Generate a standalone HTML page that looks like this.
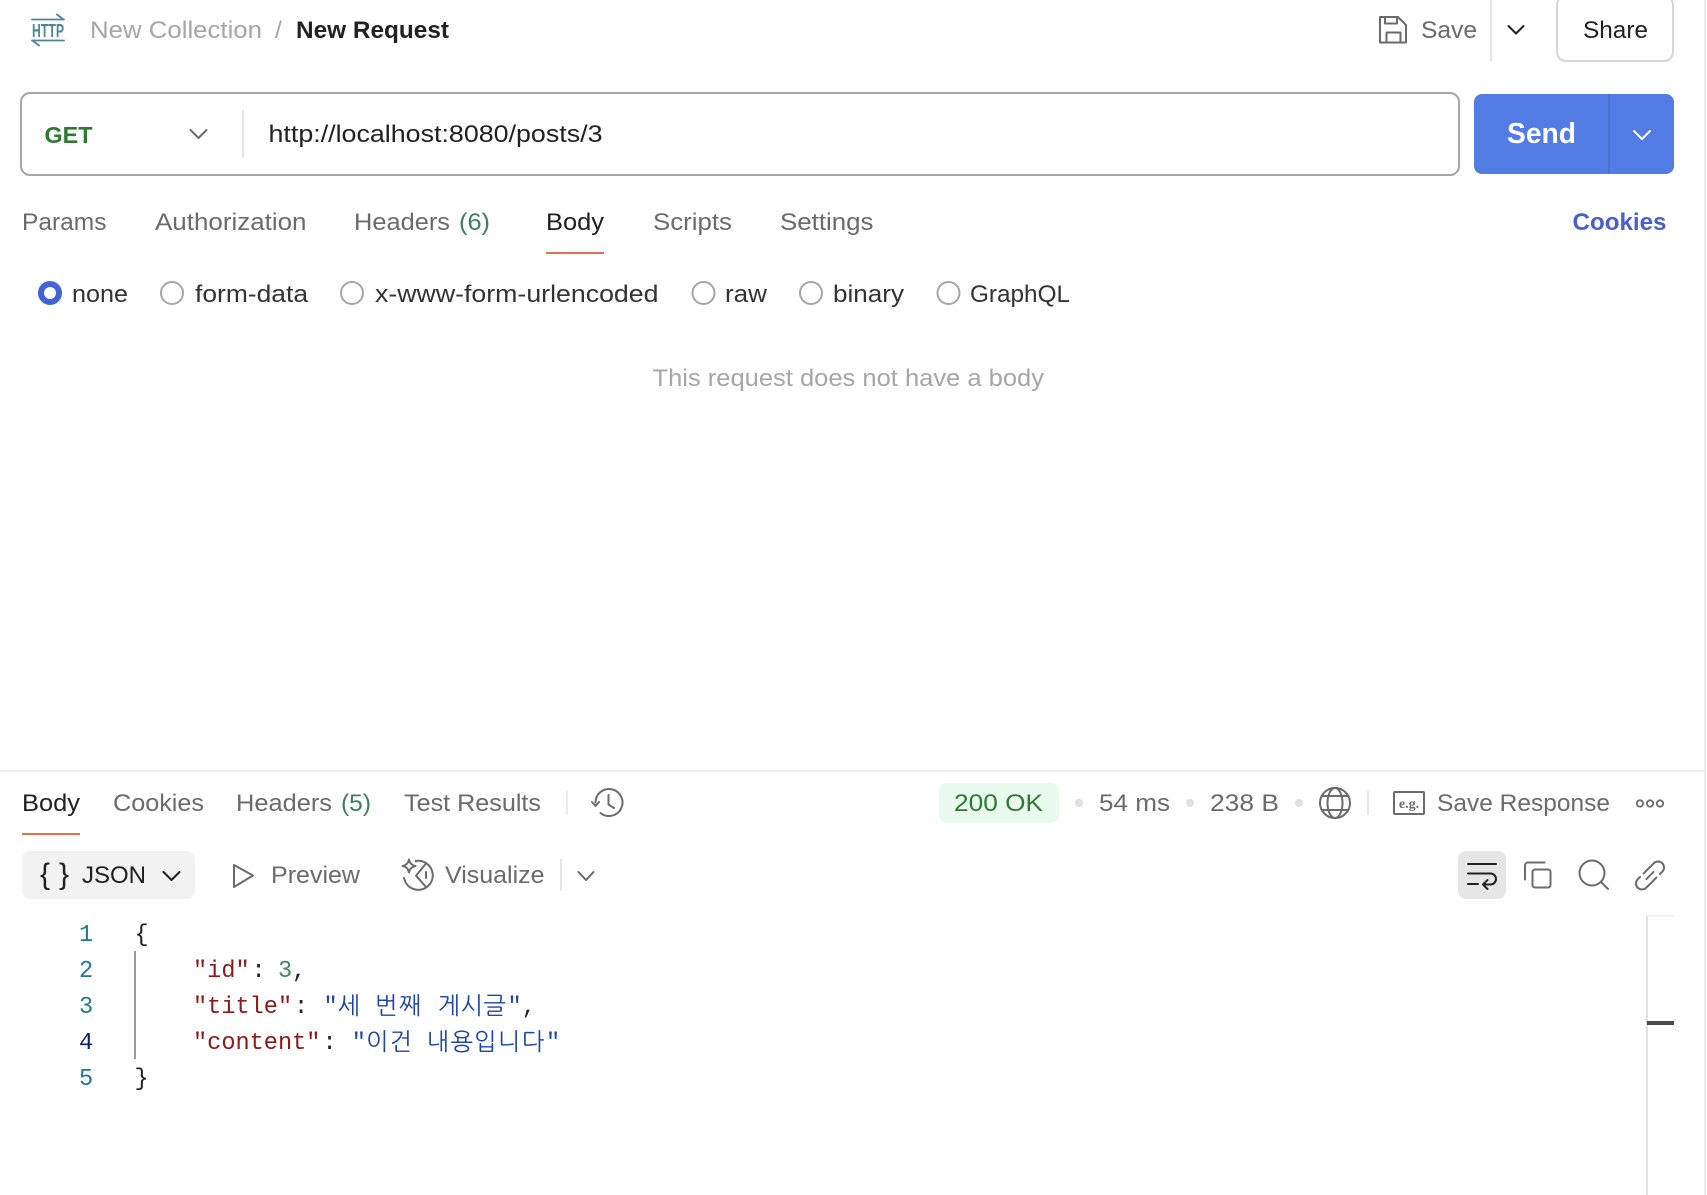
<!DOCTYPE html>
<html lang="en"><head><meta charset="utf-8"><title>New Request</title>
<style>
html,body{margin:0;padding:0;background:#fff;width:1707px;height:1195px;overflow:hidden}
svg{display:block}
text{font-family:"Liberation Sans","Noto Sans CJK KR",sans-serif;font-size:24.5px;fill:#6b6b6b}
.d{fill:#212121}.b{font-weight:bold}
.m{font-family:"Liberation Mono",monospace;font-size:23.6px}
.k{font-family:"NanumGothic","Noto Sans CJK KR",sans-serif;font-size:24px;fill:#1f45a8}
.ln{fill:#237893}.key{fill:#8b1a1a}.str{fill:#1f45a8}.num{fill:#3f8a62}.p{fill:#212121}
.i{fill:none;stroke:#6b6b6b;stroke-width:2;stroke-linecap:round;stroke-linejoin:round}
.id{fill:none;stroke:#212121;stroke-width:2;stroke-linecap:round;stroke-linejoin:round}
</style></head><body>
<svg width="1707" height="1195" viewBox="0 0 1707 1195" xmlns="http://www.w3.org/2000/svg">
<rect width="1707" height="1195" fill="#fff"/>
<rect x="1704" y="0" width="2" height="1195" fill="#ededed"/>

<!-- header -->
<g fill="none" stroke="#4f8596" stroke-width="1.800" stroke-linecap="round">
<path d="M32 19.500H64M57 14.500L63.500 19.500"/><path d="M32 40.500H64M39 45.500L32.500 40.500"/></g>
<text x="32" y="37" textLength="32" lengthAdjust="spacingAndGlyphs" class="b" style="font-size:18px;fill:#4f8596">HTTP</text>
<text x="90" y="38" textLength="172" lengthAdjust="spacingAndGlyphs" style="fill:#a6a6a6">New Collection</text>
<text x="275" y="38" style="fill:#a6a6a6">/</text>
<text x="296" y="38" textLength="153" lengthAdjust="spacingAndGlyphs" class="d b">New Request</text>

<g class="i"><path d="M1380 17H1398L1406 25V42.500H1380Z"/><path d="M1385 17V23.500H1397V17"/><path d="M1386.500 42.500V32.500H1400.500V42.500"/></g>
<text x="1421" y="38" textLength="56" lengthAdjust="spacingAndGlyphs">Save</text>
<rect x="1490" y="0" width="2" height="61" fill="#e6e6e6"/>
<path class="id" d="M1508.500 26L1516 33.500L1523.500 26"/>
<rect x="1557" y="-4" width="116" height="65" rx="9" fill="#fff" stroke="#d6d6d6" stroke-width="2"/>
<text x="1583" y="38" textLength="65" lengthAdjust="spacingAndGlyphs" class="d">Share</text>

<!-- url bar -->
<rect x="21" y="93" width="1438" height="82" rx="9" fill="#fff" stroke="#a6a6a6" stroke-width="2"/>
<text x="44.500" y="143" textLength="48" lengthAdjust="spacingAndGlyphs" class="b" style="font-size:23.500px;fill:#2f7a30">GET</text>
<path class="i" d="M190.500 130L198.500 138L206.500 130"/>
<rect x="242" y="110" width="2" height="48" fill="#e6e6e6"/>
<text x="268.500" y="142" textLength="334" lengthAdjust="spacingAndGlyphs" class="d">http://localhost:8080/posts/3</text>
<path d="M1482 94H1666A8 8 0 0 1 1674 102V166A8 8 0 0 1 1666 174H1482A8 8 0 0 1 1474 166V102A8 8 0 0 1 1482 94Z" fill="#527be4"/>
<rect x="1608" y="94" width="2" height="80" fill="#4a6fd2"/>
<text x="1507" y="143" textLength="69" lengthAdjust="spacingAndGlyphs" class="b" style="font-size:29px;fill:#fff">Send</text>
<path d="M1634 131L1642 139L1650 131" fill="none" stroke="#fff" stroke-width="2" stroke-linecap="round" stroke-linejoin="round"/>

<!-- tabs -->
<text x="22" y="230" textLength="84.500" lengthAdjust="spacingAndGlyphs">Params</text>
<text x="155" y="230" textLength="151.500" lengthAdjust="spacingAndGlyphs">Authorization</text>
<text x="354" y="230" textLength="96" lengthAdjust="spacingAndGlyphs">Headers</text>
<text x="459" y="230" textLength="31" lengthAdjust="spacingAndGlyphs" style="fill:#3f7f5f">(6)</text>
<text x="546" y="230" textLength="58" lengthAdjust="spacingAndGlyphs" class="d">Body</text>
<rect x="546" y="252" width="58" height="2" fill="#e2724a"/>
<text x="653" y="230" textLength="79" lengthAdjust="spacingAndGlyphs">Scripts</text>
<text x="780" y="230" textLength="93.500" lengthAdjust="spacingAndGlyphs">Settings</text>
<text x="1572.500" y="230" textLength="94" lengthAdjust="spacingAndGlyphs" class="b" style="fill:#4a5fc9">Cookies</text>

<!-- radios -->
<circle cx="50" cy="293" r="9" fill="#fff" stroke="#4263d2" stroke-width="6"/>
<text x="72" y="302" textLength="56" lengthAdjust="spacingAndGlyphs" style="fill:#333">none</text>
<g fill="#fff" stroke="#a6a6a6" stroke-width="2"><circle cx="172" cy="293" r="11"/><circle cx="352" cy="293" r="11"/><circle cx="703.500" cy="293" r="11"/><circle cx="811" cy="293" r="11"/><circle cx="948.500" cy="293" r="11"/></g>
<text x="195" y="302" textLength="113" lengthAdjust="spacingAndGlyphs" style="fill:#333">form-data</text>
<text x="375" y="302" textLength="283.500" lengthAdjust="spacingAndGlyphs" style="fill:#333">x-www-form-urlencoded</text>
<text x="725" y="302" textLength="42" lengthAdjust="spacingAndGlyphs" style="fill:#333">raw</text>
<text x="833" y="302" textLength="71" lengthAdjust="spacingAndGlyphs" style="fill:#333">binary</text>
<text x="970" y="302" textLength="100" lengthAdjust="spacingAndGlyphs" style="fill:#333">GraphQL</text>
<text x="652.500" y="386" textLength="391.500" lengthAdjust="spacingAndGlyphs" style="fill:#a6a6a6">This request does not have a body</text>

<!-- response -->
<rect x="0" y="770" width="1704" height="2" fill="#ededed"/>
<text x="22" y="811" textLength="58" lengthAdjust="spacingAndGlyphs" class="d">Body</text>
<rect x="22" y="833" width="58" height="2" fill="#e2724a"/>
<text x="113" y="811" textLength="91" lengthAdjust="spacingAndGlyphs">Cookies</text>
<text x="236" y="811" textLength="96" lengthAdjust="spacingAndGlyphs">Headers</text>
<text x="341" y="811" textLength="30" lengthAdjust="spacingAndGlyphs" style="fill:#3f7f5f">(5)</text>
<text x="404" y="811" textLength="137" lengthAdjust="spacingAndGlyphs">Test Results</text>
<rect x="566" y="791" width="2" height="24" fill="#ededed"/>
<g class="i"><path d="M595.500 802.500A13.500 13.500 0 1 1 600.500 813"/><path d="M592 802L595.500 806L599 802"/><path d="M608.500 795V804.500L614 808"/></g>

<rect x="939" y="783" width="120" height="40" rx="8" fill="#e9fbef"/>
<text x="954" y="811" textLength="89" lengthAdjust="spacingAndGlyphs" style="fill:#2f7a30">200 OK</text>
<g fill="#e0e0e0"><circle cx="1079" cy="803" r="4"/><circle cx="1190" cy="803" r="4"/><circle cx="1299" cy="803" r="4"/></g>
<text x="1099" y="811" textLength="71" lengthAdjust="spacingAndGlyphs">54 ms</text>
<text x="1210" y="811" textLength="69" lengthAdjust="spacingAndGlyphs">238 B</text>
<g class="i"><circle cx="1335" cy="803" r="15"/><ellipse cx="1335" cy="803" rx="7.500" ry="15"/><path d="M1322 796H1348M1322 810H1348"/></g>
<rect x="1367" y="791" width="2" height="24" fill="#e6e6e6"/>
<rect x="1394" y="792" width="30" height="22" rx="1" fill="none" stroke="#6b6b6b" stroke-width="2"/>
<text x="1409" y="808" text-anchor="middle" class="b" style="font-family:'Liberation Serif',serif;font-size:14px">e.g.</text>
<text x="1437" y="811" textLength="173" lengthAdjust="spacingAndGlyphs">Save Response</text>
<g fill="none" stroke="#6b6b6b" stroke-width="1.800"><circle cx="1640" cy="803.500" r="3.200"/><circle cx="1650" cy="803.500" r="3.200"/><circle cx="1660" cy="803.500" r="3.200"/></g>

<!-- response toolbar -->
<rect x="22" y="851" width="173" height="48" rx="8" fill="#f2f2f2"/>
<text x="40" y="884" style="font-size:30px;fill:#212121">{</text>
<text x="59" y="884" style="font-size:30px;fill:#212121">}</text>
<text x="82" y="883" textLength="64" lengthAdjust="spacingAndGlyphs" class="d">JSON</text>
<path class="id" d="M163.500 872L171.500 880L179.500 872"/>
<path class="i" d="M234 865L253 875.500L234 887Z"/>
<text x="271" y="883" textLength="89" lengthAdjust="spacingAndGlyphs">Preview</text>
<g class="i"><path d="M416 861A14.500 14.500 0 1 1 404 878"/><path d="M426 863.500L416 875.700L426 887"/><path d="M426 872V878"/><path d="M409 859.500Q410 865 415.500 866Q410 867 409 872.500Q408 867 402.500 866Q408 865 409 859.500Z"/></g>
<circle cx="416" cy="861" r="1.300" fill="#6b6b6b"/>
<text x="445" y="883" textLength="99.500" lengthAdjust="spacingAndGlyphs">Visualize</text>
<rect x="560" y="859" width="2" height="32" fill="#e6e6e6"/>
<path class="i" d="M578.500 872L586 880L593.500 872"/>

<rect x="1458" y="851" width="48" height="48" rx="8" fill="#e6e6e6"/>
<g class="id"><path d="M1468 864H1496"/><path d="M1468 873.500H1490.500A5.500 5.500 0 0 1 1490.500 884.500H1483"/><path d="M1487.500 880L1483 884.500L1487.500 889"/><path d="M1468 884H1478"/></g>
<g class="i"><rect x="1532.500" y="869.500" width="18" height="18" rx="2.500"/><path d="M1544.500 862.500H1528A3 3 0 0 0 1525 865.500V879.500"/></g>
<g class="i"><circle cx="1592" cy="873" r="12.500"/><path d="M1601 882L1608 889"/></g>
<g class="i" transform="translate(1650,875.500) rotate(-45)"><path d="M-3 -6H11.300A6 6 0 0 1 11.300 6H8"/><path d="M3 6H-11.300A6 6 0 0 1 -11.300 -6H-8"/><path d="M-5 0H5"/></g>

<!-- code -->
<text class="m ln" x="79" y="941">1</text>
<text class="m ln" x="79" y="977">2</text>
<text class="m ln" x="79" y="1013">3</text>
<text class="m" x="79" y="1049" style="fill:#0b216f">4</text>
<text class="m ln" x="79" y="1085">5</text>
<rect x="134" y="951" width="2" height="108" fill="#9a9a9a"/>
<text class="m p" x="134.500" y="941">{</text>
<text class="m p" x="134.500" y="1085">}</text>
<text class="m key" x="193" y="977">"id"</text><text class="m p" x="251.500" y="977">:</text><text class="m num" x="278" y="977">3</text><text class="m p" x="292" y="977">,</text>
<text class="m key" x="193" y="1013">"title"</text><text class="m p" x="294" y="1013">:</text><text class="m str" x="323.500" y="1013">"</text>
<text class="k" x="337.600 360 375 399 423 437.500 460.500 483.400" y="1014">세 번째 게시글</text>
<text class="m str" x="507.500" y="1013">"</text><text class="m p" x="521.700" y="1013">,</text>
<text class="m key" x="193" y="1049">"content"</text><text class="m p" x="322.500" y="1049">:</text><text class="m str" x="351.800" y="1049">"</text>
<text class="k" x="366 389.500 412 426.500 450.500 474 497.700 521.800" y="1050">이건 내용입니다</text>
<text class="m str" x="546" y="1049">"</text>

<!-- minimap -->
<rect x="1646" y="915" width="2" height="280" fill="#e0e0e0"/>
<rect x="1646" y="915" width="28" height="1.500" fill="#ededed"/>
<rect x="1647" y="1021" width="27" height="4" fill="#4a4a4a"/>
</svg>
</body></html>
